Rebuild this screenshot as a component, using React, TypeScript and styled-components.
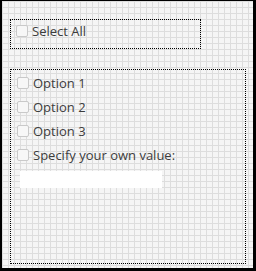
import React from 'react';
import styled, { createGlobalStyle } from 'styled-components';

const GlobalStyle = createGlobalStyle`
  html, body {
    margin: 0;
    padding: 0;
  }
  body {
    font-family: 'Open Sans', 'Noto Sans', sans-serif;
  }
`;

const Frame = styled.div`
  box-sizing: border-box;
  width: 256px;
  height: 271px;
  border-style: solid;
  border-color: #000;
  border-width: 1px 3px 3px 2px;
  background-color: #f5f5f5;
  background-image: linear-gradient(to right, #dddddd 1px, transparent 1px),
    linear-gradient(to bottom, #dddddd 1px, transparent 1px);
  background-size: 6px 6px;
  padding: 18px 7px 4px 8px;
  display: flex;
  flex-direction: column;
  gap: 20px;
`;

const Group = styled.div<{ $width?: number; $grow?: boolean }>`
  box-sizing: border-box;
  border: 1px dotted #000;
  width: ${(p) => (p.$width ? `${p.$width}px` : 'auto')};
  flex: ${(p) => (p.$grow ? '1' : 'none')};
  display: flex;
  flex-direction: column;
`;

const SelectAllGroup = styled(Group)`
  height: 30px;
  padding: 2px 0 0 5px;
`;

const OptionsGroup = styled(Group)`
  padding: 4px 0 0 6px;
  gap: 6px;
`;

const Row = styled.label`
  display: flex;
  align-items: center;
  gap: 4px;
  height: 18px;
  font-size: 13px;
  color: #3c3c3c;
  white-space: nowrap;
`;

const Box = styled.span`
  box-sizing: border-box;
  width: 12px;
  height: 12px;
  border: 1px solid #c9c9c9;
  border-radius: 2px;
  background: #f7f7f7;
  flex: none;
`;

const ValueInput = styled.div`
  width: 142px;
  height: 17px;
  margin: 1px 0 0 3px;
  background: #fff;
`;

const options = ['Option 1', 'Option 2', 'Option 3'];

const App: React.FC = () => (
  <>
    <GlobalStyle />
    <Frame>
      <SelectAllGroup $width={191}>
        <Row>
          <Box />
          Select All
        </Row>
      </SelectAllGroup>
      <OptionsGroup $grow>
        {options.map((o) => (
          <Row key={o}>
            <Box />
            {o}
          </Row>
        ))}
        <Row>
          <Box />
          Specify your own value:
        </Row>
        <ValueInput />
      </OptionsGroup>
    </Frame>
  </>
);

export default App;
